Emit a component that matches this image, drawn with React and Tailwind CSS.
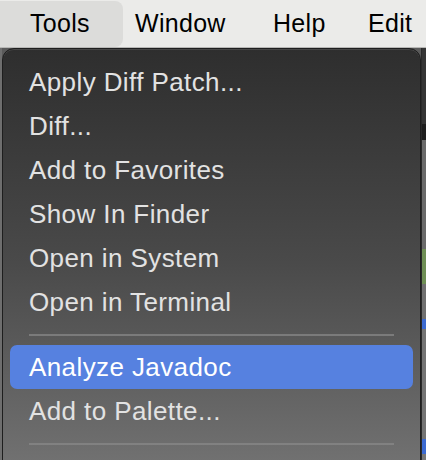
import React from 'react';

const items = [
  'Apply Diff Patch...',
  'Diff...',
  'Add to Favorites',
  'Show In Finder',
  'Open in System',
  'Open in Terminal',
];

function MenuRow({ label, active }) {
  return (
    <div
      className={
        'h-[44px] flex items-center pl-[19px] rounded-[7px] ' +
        (active ? 'bg-[#5681e0] text-white' : 'text-[#e2e2e2]')
      }
    >
      {label}
    </div>
  );
}

function Separator() {
  return (
    <div className="h-[21px] flex items-center px-[19px]">
      <div className="h-[2px] w-full bg-[#8a8a8a] opacity-70" />
    </div>
  );
}

export default function App() {
  return (
    <div
      className="w-[426px] h-[460px] overflow-hidden bg-[#5a5a5a]"
      style={{ fontFamily: '"Liberation Sans", Arial, sans-serif' }}
    >
      {/* menu bar */}
      <div className="h-[48px] flex items-center bg-[#ebebe9] text-[25px] tracking-[0.3px] text-black border-b border-[#b8b8b6]">
        <div className="h-[46px] w-[123px] pl-[30px] flex items-center bg-[#dcdcda] rounded-r-[8px]">Tools</div>
        <div className="w-[150px] pl-[12px]">Window</div>
        <div className="w-[95px]">Help</div>
        <div>Edit</div>
      </div>

      <div className="flex h-[412px]">
        <div className="w-[2px] bg-[#6e6e6e]" />
        {/* dropdown */}
        <div className="w-[419px] h-[430px] rounded-t-[12px] border border-[#1e1e1e] bg-gradient-to-b from-[#2e2e2e] via-[#4a4a4a] to-[#747474] px-[7px] pt-[11px] text-[26px] tracking-[0.4px] shadow-[inset_0_1px_0_rgba(255,255,255,0.12)]">
          {items.map((label) => (
            <MenuRow key={label} label={label} />
          ))}
          <Separator />
          <MenuRow label="Analyze Javadoc" active />
          <MenuRow label="Add to Palette..." />
          <Separator />
        </div>
        {/* background app sliver */}
        <div className="flex-1 flex flex-col border-l border-[#2a2a2a]">
          <div className="h-[76px] bg-[#353535]" />
          <div className="h-[16px] bg-[#1e1e1e]" />
          <div className="h-[109px] bg-[#6a6a6a]" />
          <div className="h-[35px] bg-[#6f8f55]" />
          <div className="h-[35px] bg-[#707070]" />
          <div className="h-[10px] bg-[#3c6ad0]" />
          <div className="h-[110px] bg-[#747474]" />
          <div className="h-[15px] bg-[#3c6ad0]" />
          <div className="flex-1 bg-[#777777]" />
        </div>
      </div>
    </div>
  );
}
